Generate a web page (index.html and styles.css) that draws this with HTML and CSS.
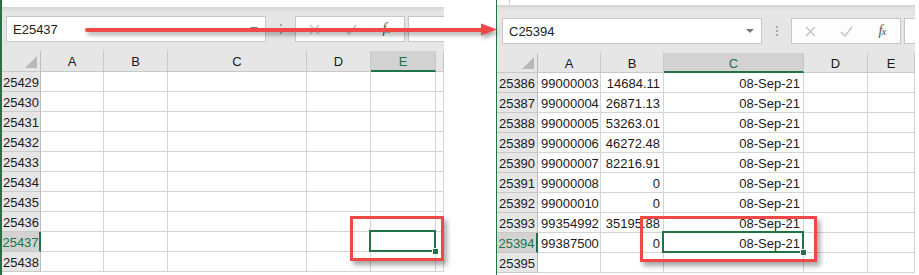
FILE: index.html
```html
<!DOCTYPE html>
<html lang="en">
<head>
  <meta charset="UTF-8" />
  <title>Go to last cell</title>
  <link rel="stylesheet" href="styles.css">
</head>
<body>
  <div class="page">
    <!-- Before: empty sheet, name box shows E25437 -->
    <div class="shot shot-left">
      <div class="top-strip"></div>
      <div class="toolbar">
        <div class="namebox"><span>E25437</span><span class="caret"></span></div>
        <div class="grip"></div>
        <div class="fxbox">
          <svg class="ico" width="11" height="11" viewBox="0 0 11 11"><path d="M1 1L10 10M10 1L1 10" /></svg>
          <svg class="ico" width="13" height="11" viewBox="0 0 13 11"><path d="M1 6L5 10L12 1" /></svg>
          <span class="fx"><i>f</i><i class="fx-x">x</i></span>
        </div>
        <div class="formula"></div>
      </div>
      <div class="sheet">
        <div class="cell hdr corner"></div>
        <div class="cell hdr col-hdr">A</div>
        <div class="cell hdr col-hdr">B</div>
        <div class="cell hdr col-hdr">C</div>
        <div class="cell hdr col-hdr">D</div>
        <div class="cell hdr col-hdr sel">E</div>
        <div class="cell hdr col-hdr"></div>

        <div class="cell hdr row-hdr">25429</div><div class="cell"></div><div class="cell"></div><div class="cell"></div><div class="cell"></div><div class="cell"></div><div class="cell"></div>
        <div class="cell hdr row-hdr">25430</div><div class="cell"></div><div class="cell"></div><div class="cell"></div><div class="cell"></div><div class="cell"></div><div class="cell"></div>
        <div class="cell hdr row-hdr">25431</div><div class="cell"></div><div class="cell"></div><div class="cell"></div><div class="cell"></div><div class="cell"></div><div class="cell"></div>
        <div class="cell hdr row-hdr">25432</div><div class="cell"></div><div class="cell"></div><div class="cell"></div><div class="cell"></div><div class="cell"></div><div class="cell"></div>
        <div class="cell hdr row-hdr">25433</div><div class="cell"></div><div class="cell"></div><div class="cell"></div><div class="cell"></div><div class="cell"></div><div class="cell"></div>
        <div class="cell hdr row-hdr">25434</div><div class="cell"></div><div class="cell"></div><div class="cell"></div><div class="cell"></div><div class="cell"></div><div class="cell"></div>
        <div class="cell hdr row-hdr">25435</div><div class="cell"></div><div class="cell"></div><div class="cell"></div><div class="cell"></div><div class="cell"></div><div class="cell"></div>
        <div class="cell hdr row-hdr">25436</div><div class="cell"></div><div class="cell"></div><div class="cell"></div><div class="cell"></div><div class="cell"></div><div class="cell"></div>
        <div class="cell hdr row-hdr sel">25437</div><div class="cell"></div><div class="cell"></div><div class="cell"></div><div class="cell"></div><div class="cell active"></div><div class="cell"></div>
        <div class="cell hdr row-hdr">25438</div><div class="cell"></div><div class="cell"></div><div class="cell"></div><div class="cell"></div><div class="cell"></div><div class="cell"></div>
      </div>
      <div class="callout callout-left"></div>
    </div>

    <!-- After: real last used cell C25394 -->
    <div class="shot shot-right">
      <div class="top-strip"></div>
      <div class="toolbar">
        <div class="namebox"><span>C25394</span><span class="caret"></span></div>
        <div class="grip"></div>
        <div class="fxbox">
          <svg class="ico" width="11" height="11" viewBox="0 0 11 11"><path d="M1 1L10 10M10 1L1 10" /></svg>
          <svg class="ico" width="13" height="11" viewBox="0 0 13 11"><path d="M1 6L5 10L12 1" /></svg>
          <span class="fx"><i>f</i><i class="fx-x">x</i></span>
        </div>
        <div class="formula"></div>
      </div>
      <div class="sheet">
        <div class="cell hdr corner"></div>
        <div class="cell hdr col-hdr">A</div>
        <div class="cell hdr col-hdr">B</div>
        <div class="cell hdr col-hdr sel">C</div>
        <div class="cell hdr col-hdr">D</div>
        <div class="cell hdr col-hdr">E</div>

        <div class="cell hdr row-hdr">25386</div><div class="cell">99000003</div><div class="cell">14684.11</div><div class="cell">08-Sep-21</div><div class="cell"></div><div class="cell"></div>
        <div class="cell hdr row-hdr">25387</div><div class="cell">99000004</div><div class="cell">26871.13</div><div class="cell">08-Sep-21</div><div class="cell"></div><div class="cell"></div>
        <div class="cell hdr row-hdr">25388</div><div class="cell">99000005</div><div class="cell">53263.01</div><div class="cell">08-Sep-21</div><div class="cell"></div><div class="cell"></div>
        <div class="cell hdr row-hdr">25389</div><div class="cell">99000006</div><div class="cell">46272.48</div><div class="cell">08-Sep-21</div><div class="cell"></div><div class="cell"></div>
        <div class="cell hdr row-hdr">25390</div><div class="cell">99000007</div><div class="cell">82216.91</div><div class="cell">08-Sep-21</div><div class="cell"></div><div class="cell"></div>
        <div class="cell hdr row-hdr">25391</div><div class="cell">99000008</div><div class="cell">0</div><div class="cell">08-Sep-21</div><div class="cell"></div><div class="cell"></div>
        <div class="cell hdr row-hdr">25392</div><div class="cell">99000010</div><div class="cell">0</div><div class="cell">08-Sep-21</div><div class="cell"></div><div class="cell"></div>
        <div class="cell hdr row-hdr">25393</div><div class="cell">99354992</div><div class="cell">35195.88</div><div class="cell">08-Sep-21</div><div class="cell"></div><div class="cell"></div>
        <div class="cell hdr row-hdr sel">25394</div><div class="cell">99387500</div><div class="cell">0</div><div class="cell active">08-Sep-21</div><div class="cell"></div><div class="cell"></div>
        <div class="cell hdr row-hdr">25395</div><div class="cell"></div><div class="cell"></div><div class="cell"></div><div class="cell"></div><div class="cell"></div>
      </div>
      <div class="callout callout-right"></div>
    </div>

    <svg class="arrow" width="919" height="60" viewBox="0 0 919 60">
      <line x1="87" y1="30" x2="484" y2="30" />
      <polygon points="481,23.5 497,29.5 481,35.5" />
    </svg>
  </div>
</body>
</html>
```

FILE: styles.css
```css
body {
  margin: 0;
  width: 919px;
  height: 275px;
  overflow: hidden;
  background: #fff;
  font-family: 'Liberation Sans', Arial, sans-serif;
  font-size: 13px;
  color: #1a1a1a;
}

.page {
  position: relative;
  display: flex;
  gap: 52px;
  height: 275px;
}

.shot {
  position: relative;
  height: 275px;
  border-left: 2px solid #217346;
}

.shot-left {
  width: 442px;
}

.shot-right {
  width: 418px;
  border-left-width: 1px;
}

.top-strip {
  position: relative;
  height: 7px;
  background: #fff;
}

.shot-right .top-strip {
  height: 5px;
}

.shot-right .top-strip::after {
  content: "";
  position: absolute;
  left: 12px;
  top: 0;
  width: 1px;
  height: 5px;
  background: #d0d0d0;
}

/* name box + formula bar */
.toolbar {
  display: flex;
  align-items: flex-start;
  height: 44px;
  padding: 9px 0 0 4px;
  box-sizing: border-box;
  background: linear-gradient(#d4d4d4, #e6e6e6 5px);
}

.shot-right .toolbar {
  height: 48px;
  padding: 13px 0 0 5px;
}

.namebox {
  width: 260px;
  height: 26px;
  box-sizing: border-box;
  padding: 0 7px 0 6px;
  display: flex;
  align-items: center;
  justify-content: space-between;
  background: #fff;
  border: 1px solid #c6c6c6;
  color: #222;
}

.caret {
  width: 0;
  height: 0;
  border-left: 4px solid transparent;
  border-right: 4px solid transparent;
  border-top: 4px solid #7a7a7a;
}

.grip {
  width: 29px;
  height: 26px;
  display: flex;
  align-items: center;
  justify-content: center;
}

.grip::before {
  content: "";
  width: 2px;
  height: 10px;
  background: repeating-linear-gradient(#a9a9a9 0 2px, transparent 2px 4px);
}

.fxbox {
  width: 110px;
  height: 26px;
  box-sizing: border-box;
  display: grid;
  grid-template-columns: 36px 36px 36px;
  align-items: center;
  justify-items: center;
  background: #fdfdfd;
  border: 1px solid #c6c6c6;
}

.ico path {
  fill: none;
  stroke: #c2c2c2;
  stroke-width: 1.4;
}

.fx {
  font-family: 'Liberation Serif', 'Times New Roman', serif;
  font-size: 14px;
  color: #555;
  letter-spacing: -1px;
}

.fx-x {
  font-size: 11px;
}

.formula {
  flex: 1;
  height: 26px;
  margin-left: 3px;
  box-sizing: border-box;
  background: #fff;
  border: 1px solid #c6c6c6;
  border-right: none;
}

/* grid */
.sheet {
  display: grid;
}

.shot-left .sheet {
  grid-template-columns: 39px 63px 64px 139px 64px 65px 8px;
}

.shot-right .sheet {
  grid-template-columns: 41px 63px 63px 140px 64px 47px;
}

.cell {
  height: 20px;
  box-sizing: border-box;
  padding: 0 3px;
  border-right: 1px solid #d4d4d4;
  border-bottom: 1px solid #d4d4d4;
  line-height: 21px;
  text-align: right;
  white-space: nowrap;
  overflow: hidden;
}

.hdr {
  background: #e6e6e6;
  border-color: #c8c8c8;
  text-align: center;
  padding: 0;
}

.shot-left .col-hdr,
.shot-left .corner {
  height: 21px;
  line-height: 22px;
}

.row-hdr {
  border-right-color: #bdbdbd;
}

.hdr.sel {
  background: #d2d2d2;
  color: #217346;
}

.col-hdr.sel {
  border-bottom: 2px solid #217346;
}

.row-hdr.sel {
  border-right: 2px solid #217346;
}

.corner {
  position: relative;
  border-right-color: #bdbdbd;
}

.corner::after {
  content: "";
  position: absolute;
  right: 3px;
  bottom: 3px;
  width: 0;
  height: 0;
  border-left: 12px solid transparent;
  border-bottom: 12px solid #b8b8b8;
}

.active {
  position: relative;
  overflow: visible;
}

.active::after {
  content: "";
  position: absolute;
  left: -2px;
  top: -2px;
  right: -1px;
  bottom: -1px;
  border: 2px solid #217346;
}

.active::before {
  content: "";
  position: absolute;
  right: -3px;
  bottom: -3px;
  width: 5px;
  height: 5px;
  background: #217346;
  box-shadow: 0 0 0 1px #fff;
  z-index: 1;
}

/* red annotations */
.callout {
  position: absolute;
  box-sizing: border-box;
  border: 3px solid #f04747;
  box-shadow: 3px 4px 5px rgba(0, 0, 0, 0.35);
  z-index: 3;
}

.callout-left {
  left: 348px;
  top: 216px;
  width: 94px;
  height: 45px;
}

.callout-right {
  left: 143px;
  top: 216px;
  width: 177px;
  height: 46px;
}

.arrow {
  position: absolute;
  left: 0;
  top: 0;
  z-index: 5;
  filter: drop-shadow(2px 3px 2px rgba(0, 0, 0, 0.35));
}

.arrow line {
  stroke: #f04747;
  stroke-width: 4;
  stroke-linecap: round;
}

.arrow polygon {
  fill: #f04747;
}
```
